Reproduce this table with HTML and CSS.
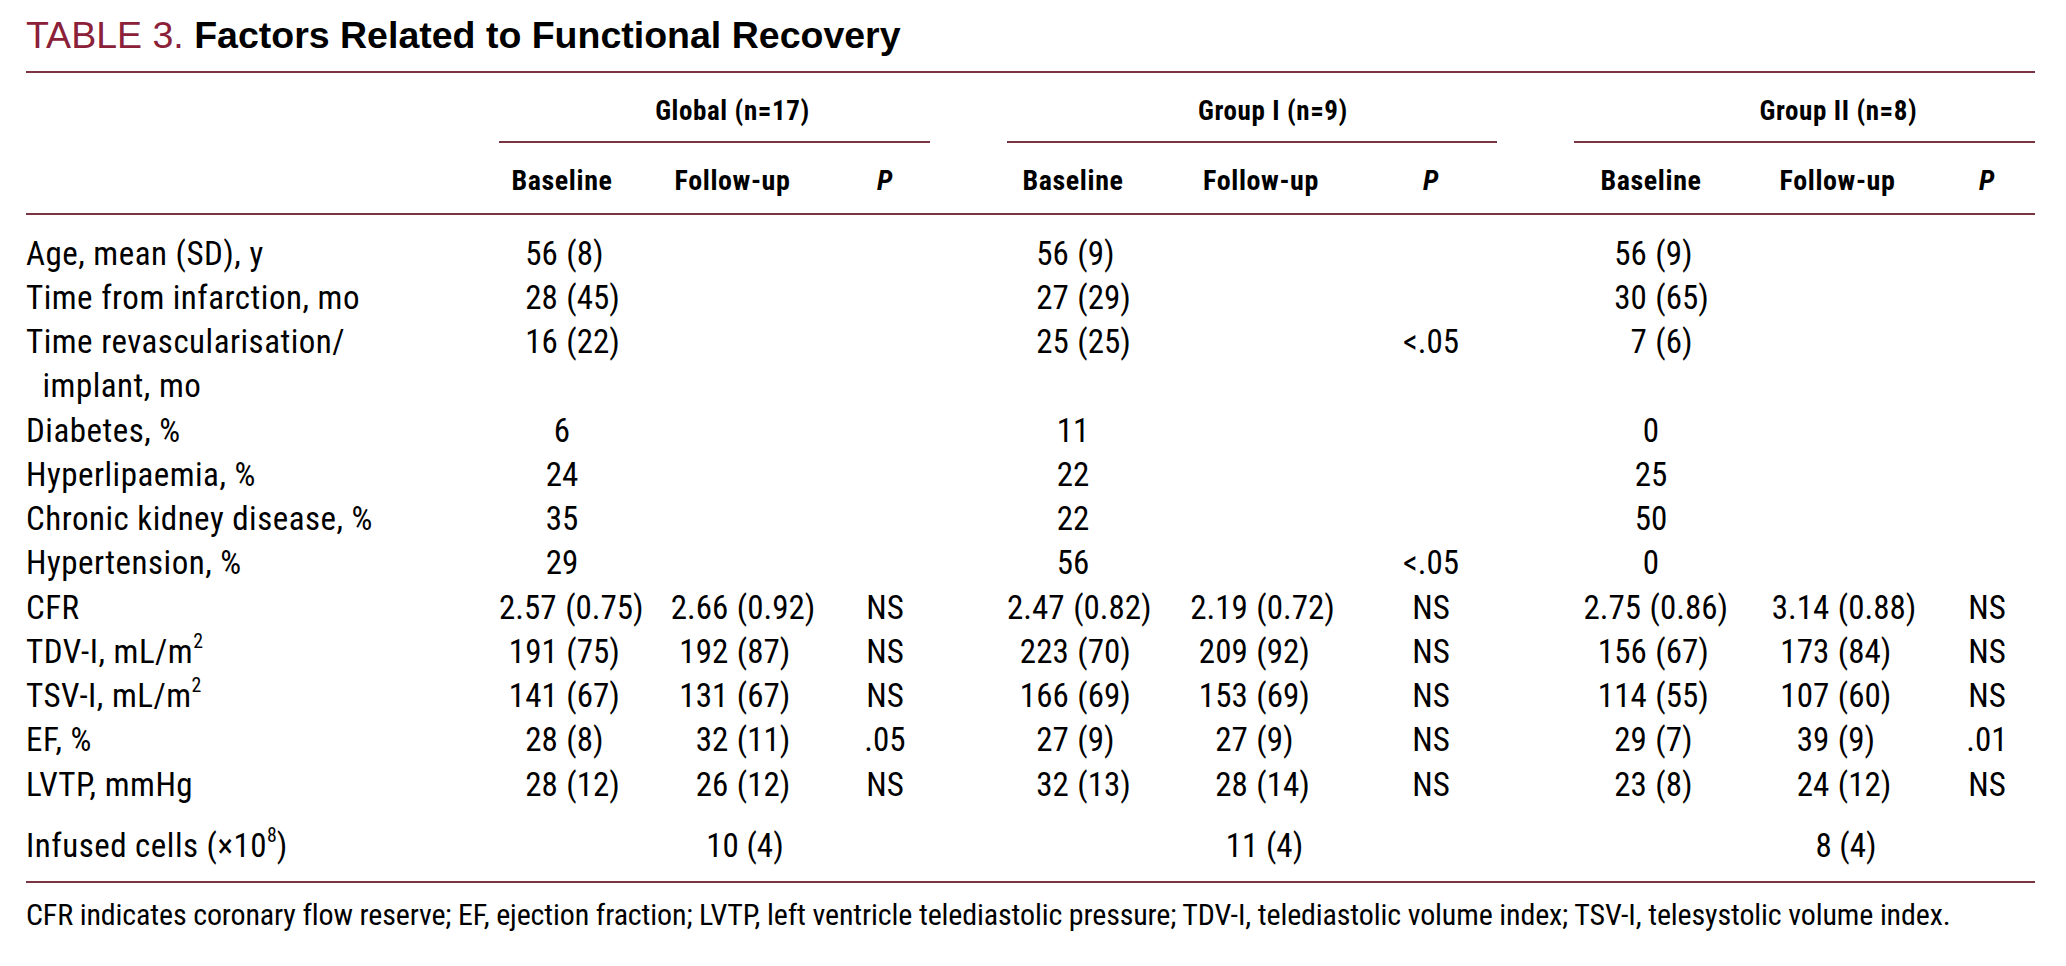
FILE: index.html
```html
<!DOCTYPE html>
<html lang="en">
<head>
<meta charset="utf-8">
<title>Table 3. Factors Related to Functional Recovery</title>
<link rel="stylesheet" href="styles.css">
</head>
<body>
<div class="page">
  <h1 class="title"><span class="tag">TABLE 3.</span> <span class="name">Factors Related to Functional Recovery</span></h1>

  <div class="table">
    <div class="thead">
      <div class="row row-groups">
        <div class="lbl"></div>
        <div class="gh gh-a"><span class="gh-text">Global (n=17)</span></div>
        <div class="gh gh-b"><span class="gh-text">Group I (n=9)</span></div>
        <div class="gh gh-c"><span class="gh-text">Group II (n=8)</span></div>
      </div>
      <div class="row row-cols">
        <div class="lbl"></div>
        <div class="grp ga"><div class="c">Baseline</div><div class="c">Follow-up</div><div class="c"><i>P</i></div></div>
        <div class="grp gb"><div class="c">Baseline</div><div class="c">Follow-up</div><div class="c"><i>P</i></div></div>
        <div class="grp gc"><div class="c">Baseline</div><div class="c">Follow-up</div><div class="c"><i>P</i></div></div>
      </div>
    </div>

    <div class="tbody">
      <div class="row">
        <div class="lbl">Age, mean (SD), y</div>
        <div class="grp ga"><div class="c sp"><span class="m">56</span><span class="s">(8)</span></div><div class="c"></div><div class="c"></div></div>
        <div class="grp gb"><div class="c sp"><span class="m">56</span><span class="s">(9)</span></div><div class="c"></div><div class="c"></div></div>
        <div class="grp gc"><div class="c sp"><span class="m">56</span><span class="s">(9)</span></div><div class="c"></div><div class="c"></div></div>
      </div>
      <div class="row">
        <div class="lbl">Time from infarction, mo</div>
        <div class="grp ga"><div class="c sp"><span class="m">28</span><span class="s">(45)</span></div><div class="c"></div><div class="c"></div></div>
        <div class="grp gb"><div class="c sp"><span class="m">27</span><span class="s">(29)</span></div><div class="c"></div><div class="c"></div></div>
        <div class="grp gc"><div class="c sp"><span class="m">30</span><span class="s">(65)</span></div><div class="c"></div><div class="c"></div></div>
      </div>
      <div class="row">
        <div class="lbl">Time revascularisation/<br>implant, mo</div>
        <div class="grp ga"><div class="c sp"><span class="m">16</span><span class="s">(22)</span></div><div class="c"></div><div class="c"></div></div>
        <div class="grp gb"><div class="c sp"><span class="m">25</span><span class="s">(25)</span></div><div class="c"></div><div class="c">&lt;.05</div></div>
        <div class="grp gc"><div class="c sp"><span class="m">7</span><span class="s">(6)</span></div><div class="c"></div><div class="c"></div></div>
      </div>
      <div class="row">
        <div class="lbl">Diabetes, %</div>
        <div class="grp ga"><div class="c">6</div><div class="c"></div><div class="c"></div></div>
        <div class="grp gb"><div class="c">11</div><div class="c"></div><div class="c"></div></div>
        <div class="grp gc"><div class="c">0</div><div class="c"></div><div class="c"></div></div>
      </div>
      <div class="row">
        <div class="lbl">Hyperlipaemia, %</div>
        <div class="grp ga"><div class="c">24</div><div class="c"></div><div class="c"></div></div>
        <div class="grp gb"><div class="c">22</div><div class="c"></div><div class="c"></div></div>
        <div class="grp gc"><div class="c">25</div><div class="c"></div><div class="c"></div></div>
      </div>
      <div class="row">
        <div class="lbl">Chronic kidney disease, %</div>
        <div class="grp ga"><div class="c">35</div><div class="c"></div><div class="c"></div></div>
        <div class="grp gb"><div class="c">22</div><div class="c"></div><div class="c"></div></div>
        <div class="grp gc"><div class="c">50</div><div class="c"></div><div class="c"></div></div>
      </div>
      <div class="row">
        <div class="lbl">Hypertension, %</div>
        <div class="grp ga"><div class="c">29</div><div class="c"></div><div class="c"></div></div>
        <div class="grp gb"><div class="c">56</div><div class="c"></div><div class="c">&lt;.05</div></div>
        <div class="grp gc"><div class="c">0</div><div class="c"></div><div class="c"></div></div>
      </div>
      <div class="row">
        <div class="lbl">CFR</div>
        <div class="grp ga"><div class="c sp"><span class="m">2.57</span><span class="s">(0.75)</span></div><div class="c sp"><span class="m">2.66</span><span class="s">(0.92)</span></div><div class="c">NS</div></div>
        <div class="grp gb"><div class="c sp"><span class="m">2.47</span><span class="s">(0.82)</span></div><div class="c sp"><span class="m">2.19</span><span class="s">(0.72)</span></div><div class="c">NS</div></div>
        <div class="grp gc"><div class="c sp"><span class="m">2.75</span><span class="s">(0.86)</span></div><div class="c sp"><span class="m">3.14</span><span class="s">(0.88)</span></div><div class="c">NS</div></div>
      </div>
      <div class="row">
        <div class="lbl">TDV-I, mL/m<sup class="sup">2</sup></div>
        <div class="grp ga"><div class="c sp"><span class="m">191</span><span class="s">(75)</span></div><div class="c sp"><span class="m">192</span><span class="s">(87)</span></div><div class="c">NS</div></div>
        <div class="grp gb"><div class="c sp"><span class="m">223</span><span class="s">(70)</span></div><div class="c sp"><span class="m">209</span><span class="s">(92)</span></div><div class="c">NS</div></div>
        <div class="grp gc"><div class="c sp"><span class="m">156</span><span class="s">(67)</span></div><div class="c sp"><span class="m">173</span><span class="s">(84)</span></div><div class="c">NS</div></div>
      </div>
      <div class="row">
        <div class="lbl">TSV-I, mL/m<sup class="sup">2</sup></div>
        <div class="grp ga"><div class="c sp"><span class="m">141</span><span class="s">(67)</span></div><div class="c sp"><span class="m">131</span><span class="s">(67)</span></div><div class="c">NS</div></div>
        <div class="grp gb"><div class="c sp"><span class="m">166</span><span class="s">(69)</span></div><div class="c sp"><span class="m">153</span><span class="s">(69)</span></div><div class="c">NS</div></div>
        <div class="grp gc"><div class="c sp"><span class="m">114</span><span class="s">(55)</span></div><div class="c sp"><span class="m">107</span><span class="s">(60)</span></div><div class="c">NS</div></div>
      </div>
      <div class="row">
        <div class="lbl">EF, %</div>
        <div class="grp ga"><div class="c sp"><span class="m">28</span><span class="s">(8)</span></div><div class="c sp"><span class="m">32</span><span class="s">(11)</span></div><div class="c">.05</div></div>
        <div class="grp gb"><div class="c sp"><span class="m">27</span><span class="s">(9)</span></div><div class="c sp"><span class="m">27</span><span class="s">(9)</span></div><div class="c">NS</div></div>
        <div class="grp gc"><div class="c sp"><span class="m">29</span><span class="s">(7)</span></div><div class="c sp"><span class="m">39</span><span class="s">(9)</span></div><div class="c">.01</div></div>
      </div>
      <div class="row">
        <div class="lbl">LVTP, mmHg</div>
        <div class="grp ga"><div class="c sp"><span class="m">28</span><span class="s">(12)</span></div><div class="c sp"><span class="m">26</span><span class="s">(12)</span></div><div class="c">NS</div></div>
        <div class="grp gb"><div class="c sp"><span class="m">32</span><span class="s">(13)</span></div><div class="c sp"><span class="m">28</span><span class="s">(14)</span></div><div class="c">NS</div></div>
        <div class="grp gc"><div class="c sp"><span class="m">23</span><span class="s">(8)</span></div><div class="c sp"><span class="m">24</span><span class="s">(12)</span></div><div class="c">NS</div></div>
      </div>
      <div class="row row-total">
        <div class="lbl">Infused cells (×10<sup class="sup">8</sup>)</div>
        <div class="grp ga"><div class="c"></div><div class="c tot">10 (4)</div><div class="c"></div></div>
        <div class="grp gb"><div class="c"></div><div class="c tot">11 (4)</div><div class="c"></div></div>
        <div class="grp gc"><div class="c"></div><div class="c tot">8 (4)</div><div class="c"></div></div>
      </div>
    </div>
  </div>

  <p class="note">CFR indicates coronary flow reserve; EF, ejection fraction; LVTP, left ventricle telediastolic pressure; TDV-I, telediastolic volume index; TSV-I, telesystolic volume index.</p>
</div>
</body>
</html>
```

FILE: styles.css
```css
:root {
  --rule: #7a3442;
  --accent: #8b2139;
  --cond: "Roboto Condensed", "DejaVu Sans Condensed", "Liberation Sans", sans-serif;
}

body {
  margin: 0;
  background: #ffffff;
  color: #000000;
}

.page {
  padding: 10px 31px 0 26px;
}

.title {
  margin: 0;
  font-family: "Liberation Sans", Arial, sans-serif;
  font-size: 37.5px;
  line-height: 50px;
  font-weight: 400;
}

.title .tag {
  color: var(--accent);
}

.title .name {
  font-weight: 700;
  color: #000000;
}

.table {
  margin-top: 11px;
  border-top: 2px solid var(--rule);
  font-family: var(--cond);
}

.row {
  display: grid;
  grid-template-columns: 396px 431px 490px 461px;
  column-gap: 77px;
  align-items: start;
}

.grp {
  display: grid;
}

.ga { grid-template-columns: 126px 215px 90px; }
.gb { grid-template-columns: 132px 226px 132px; }
.gc { grid-template-columns: 154px 211px 96px; }

.c {
  text-align: center;
  white-space: nowrap;
}

/* header */
.thead {
  border-bottom: 2px solid var(--rule);
  font-weight: 700;
  font-size: 28px;
  line-height: 36px;
  letter-spacing: 0.6px;
}

.gh {
  display: grid;
  padding: 20px 0 12px;
  border-bottom: 2px solid var(--rule);
  white-space: nowrap;
  font-size: 27px;
}

.gh-a { grid-template-columns: 126px 215px 90px; }
.gh-b { grid-template-columns: 132px 226px 132px; }
.gh-c { grid-template-columns: 154px 211px 96px; }

.gh-text {
  grid-column: 2;
  justify-self: center;
}

.gh-b .gh-text {
  padding-left: 42px;
}

.gh-c .gh-text {
  padding-left: 10px;
}

.row-cols {
  padding: 20px 0 14px;
}

.row-cols .gb .c:nth-child(2) {
  padding-left: 18px;
}

.row-cols .gc .c:nth-child(2) {
  padding-left: 8px;
}

.row-cols i {
  font-style: italic;
}

/* body */
.tbody {
  padding: 16.5px 0 12.3px;
  border-bottom: 2px solid var(--rule);
  font-size: 33px;
  line-height: 44.25px;
}

.lbl {
  padding-left: 0.5em;
  text-indent: -0.5em;
  white-space: nowrap;
  letter-spacing: 0.5px;
}

.sp {
  display: flex;
}

.sp .m {
  flex: 1 1 0;
  text-align: right;
  padding-right: 0.13em;
}

.sp .s {
  flex: 1 1 0;
  text-align: left;
  padding-left: 0.13em;
}

.tot {
  padding-left: 25px;
}

.row-total {
  margin-top: 17.7px;
}

.sup {
  font-size: 0.6em;
  line-height: 0;
  vertical-align: 0.75em;
  letter-spacing: 0;
}

.note {
  margin: 11.6px 0 0;
  font-family: var(--cond);
  font-size: 30px;
  line-height: 40px;
  letter-spacing: -0.14px;
  white-space: nowrap;
}
```
